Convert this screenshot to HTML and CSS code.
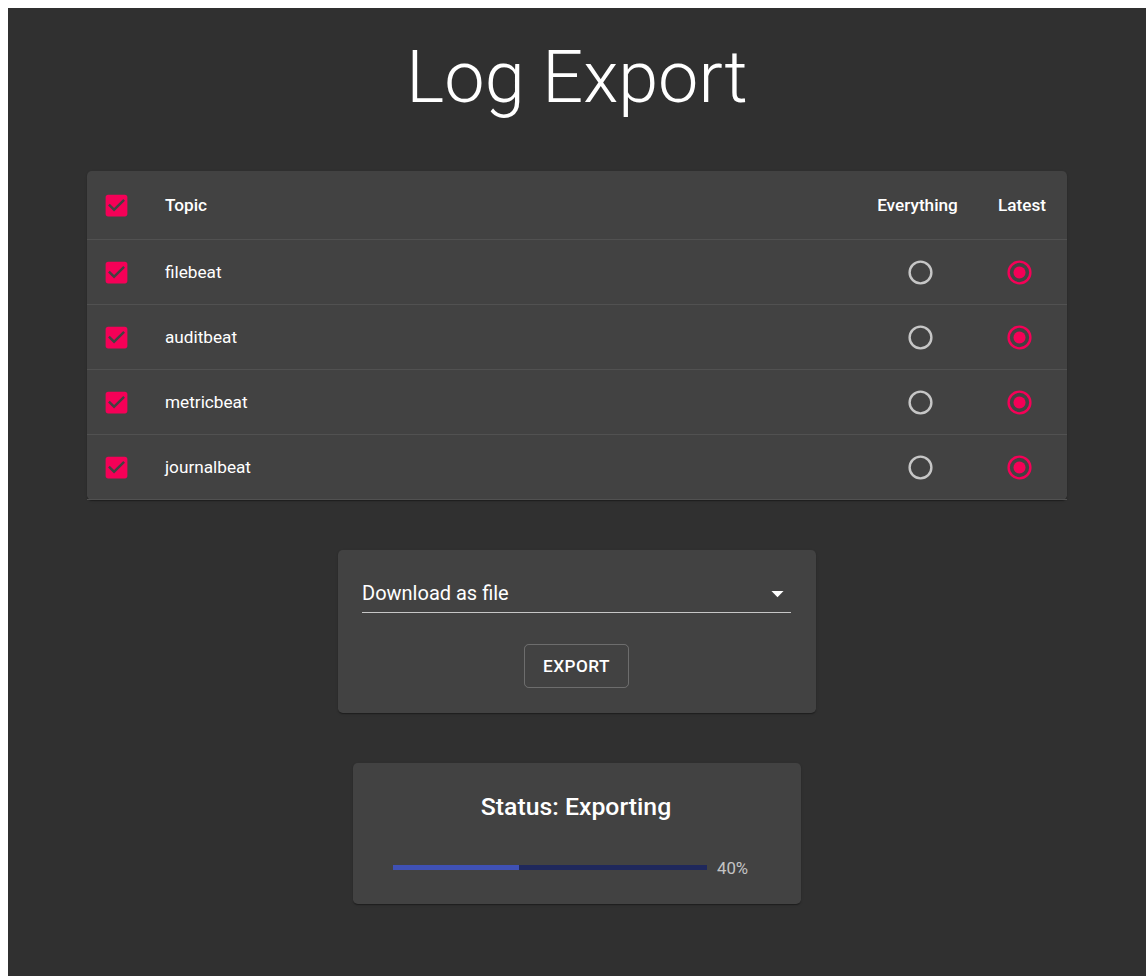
FILE: index.html
```html
<!DOCTYPE html>
<html lang="en">
<head>
<meta charset="utf-8">
<title>Log Export</title>
<link rel="stylesheet" href="styles.css">
</head>
<body>
<div class="page">
  <h1 class="title">Log Export</h1>

  <div class="card topics">
    <div class="row head">
      <div class="cell check">
        <svg class="checkbox" viewBox="0 0 24 24"><path d="M19 3H5c-1.11 0-2 .9-2 2v14c0 1.1.89 2 2 2h14c1.11 0 2-.9 2-2V5c0-1.1-.89-2-2-2zm-9 14l-5-5 1.41-1.41L10 14.17l7.59-7.59L19 8l-9 9z"/></svg>
      </div>
      <div class="cell name">Topic</div>
      <div class="cell opt">Everything</div>
      <div class="cell opt last">Latest</div>
    </div>

    <div class="row">
      <div class="cell check"><svg class="checkbox" viewBox="0 0 24 24"><path d="M19 3H5c-1.11 0-2 .9-2 2v14c0 1.1.89 2 2 2h14c1.11 0 2-.9 2-2V5c0-1.1-.89-2-2-2zm-9 14l-5-5 1.41-1.41L10 14.17l7.59-7.59L19 8l-9 9z"/></svg></div>
      <div class="cell name">filebeat</div>
      <div class="cell opt"><svg class="radio off" viewBox="0 0 24 24"><circle cx="12" cy="12" r="9"/></svg></div>
      <div class="cell opt last"><svg class="radio on" viewBox="0 0 24 24"><circle cx="12" cy="12" r="9"/><circle class="dot" cx="12" cy="12" r="5"/></svg></div>
    </div>

    <div class="row">
      <div class="cell check"><svg class="checkbox" viewBox="0 0 24 24"><path d="M19 3H5c-1.11 0-2 .9-2 2v14c0 1.1.89 2 2 2h14c1.11 0 2-.9 2-2V5c0-1.1-.89-2-2-2zm-9 14l-5-5 1.41-1.41L10 14.17l7.59-7.59L19 8l-9 9z"/></svg></div>
      <div class="cell name">auditbeat</div>
      <div class="cell opt"><svg class="radio off" viewBox="0 0 24 24"><circle cx="12" cy="12" r="9"/></svg></div>
      <div class="cell opt last"><svg class="radio on" viewBox="0 0 24 24"><circle cx="12" cy="12" r="9"/><circle class="dot" cx="12" cy="12" r="5"/></svg></div>
    </div>

    <div class="row">
      <div class="cell check"><svg class="checkbox" viewBox="0 0 24 24"><path d="M19 3H5c-1.11 0-2 .9-2 2v14c0 1.1.89 2 2 2h14c1.11 0 2-.9 2-2V5c0-1.1-.89-2-2-2zm-9 14l-5-5 1.41-1.41L10 14.17l7.59-7.59L19 8l-9 9z"/></svg></div>
      <div class="cell name">metricbeat</div>
      <div class="cell opt"><svg class="radio off" viewBox="0 0 24 24"><circle cx="12" cy="12" r="9"/></svg></div>
      <div class="cell opt last"><svg class="radio on" viewBox="0 0 24 24"><circle cx="12" cy="12" r="9"/><circle class="dot" cx="12" cy="12" r="5"/></svg></div>
    </div>

    <div class="row">
      <div class="cell check"><svg class="checkbox" viewBox="0 0 24 24"><path d="M19 3H5c-1.11 0-2 .9-2 2v14c0 1.1.89 2 2 2h14c1.11 0 2-.9 2-2V5c0-1.1-.89-2-2-2zm-9 14l-5-5 1.41-1.41L10 14.17l7.59-7.59L19 8l-9 9z"/></svg></div>
      <div class="cell name">journalbeat</div>
      <div class="cell opt"><svg class="radio off" viewBox="0 0 24 24"><circle cx="12" cy="12" r="9"/></svg></div>
      <div class="cell opt last"><svg class="radio on" viewBox="0 0 24 24"><circle cx="12" cy="12" r="9"/><circle class="dot" cx="12" cy="12" r="5"/></svg></div>
    </div>
  </div>

  <div class="card export">
    <div class="select">
      <span class="select-value">Download as file</span>
      <svg class="select-arrow" viewBox="0 0 24 24"><path d="M7 10l5 5 5-5z"/></svg>
    </div>
    <button class="btn-outlined" type="button">Export</button>
  </div>

  <div class="card status">
    <div class="status-title">Status: Exporting</div>
    <div class="progress-row">
      <div class="progress"><div class="progress-bar" style="width: 40%"></div></div>
      <div class="progress-label">40%</div>
    </div>
  </div>
</div>
</body>
</html>
```

FILE: styles.css
```css
html {
  overflow: hidden;
}

body {
  margin: 0;
  background: #fff;
  font-family: Roboto, "Noto Sans", Arial, sans-serif;
  color: #fff;
}

.page {
  margin: 8px 0 0 8px;
  min-height: calc(100vh - 8px);
  background: #303030;
  padding-top: 27px;
  box-sizing: border-box;
  display: flex;
  flex-direction: column;
  align-items: center;
}

.title {
  margin: 0;
  font-size: 72px;
  font-weight: 300;
  line-height: 86.4px;
  text-align: center;
}

.card {
  background: #424242;
  border-radius: 4.8px;
  box-shadow: 0 2px 1px -1px rgba(0, 0, 0, 0.2), 0 1px 1px 0 rgba(0, 0, 0, 0.14), 0 1px 3px 0 rgba(0, 0, 0, 0.12);
  box-sizing: border-box;
}

/* topic table */
.topics {
  width: 980px;
  margin-top: 50px;
}

.row {
  display: grid;
  grid-template-columns: 78px 1fr 119px 90px;
  align-items: center;
  height: 65px;
  border-bottom: 1px solid #515151;
  box-sizing: border-box;
  font-size: 17.2px;
}

.row.head {
  height: 69px;
  font-weight: 500;
}

.cell.check {
  padding-left: 15px;
  display: flex;
}

.checkbox {
  width: 29px;
  height: 29px;
  fill: #f50057;
}

.cell.name {
  color: #fff;
}

.cell.opt {
  display: flex;
  justify-content: center;
}

.cell.opt:not(.last) {
  padding-left: 5px;
}

.cell.opt.last {
  padding-right: 6px;
}

.row.head .cell.opt {
  padding: 0;
}

.radio {
  width: 29px;
  height: 29px;
  fill: none;
  stroke-width: 2;
}

.radio.off {
  stroke: rgba(255, 255, 255, 0.7);
}

.radio.on {
  stroke: #f50057;
}

.radio .dot {
  fill: #f50057;
  stroke: none;
}

/* export card */
.export {
  width: 478px;
  margin-top: 50px;
  padding: 25px 25px 25px 24px;
  display: flex;
  flex-direction: column;
  align-items: center;
}

.select {
  align-self: stretch;
  display: flex;
  align-items: center;
  justify-content: space-between;
  height: 38px;
  box-sizing: border-box;
  padding: 7px 0 7px;
  border-bottom: 1px solid rgba(255, 255, 255, 0.7);
  font-size: 20px;
}

.select-value {
  line-height: 23px;
}

.select-arrow {
  width: 29px;
  height: 29px;
  fill: #fff;
  margin-right: -1px;
}

.btn-outlined {
  margin-top: 31px;
  height: 44px;
  padding: 0 18px;
  background: transparent;
  border: 1px solid rgba(255, 255, 255, 0.23);
  border-radius: 4.8px;
  color: #fff;
  font-family: inherit;
  font-size: 17.2px;
  font-weight: 500;
  letter-spacing: 0.48px;
  text-transform: uppercase;
}

/* status card */
.status {
  width: 448px;
  margin-top: 50px;
  padding: 25px 42px 24px 40px;
}

.status-title {
  font-size: 24.8px;
  font-weight: 500;
  line-height: 38.4px;
  text-align: center;
}

.progress-row {
  margin-top: 29px;
  display: flex;
  align-items: center;
  height: 24px;
}

.progress {
  flex: 1;
  height: 5px;
  background: #1f285c;
  margin-right: 9.6px;
  overflow: hidden;
}

.progress-bar {
  height: 100%;
  background: #3f51b5;
}

.progress-label {
  min-width: 42px;
  font-size: 16.8px;
  color: rgba(255, 255, 255, 0.7);
}
```
